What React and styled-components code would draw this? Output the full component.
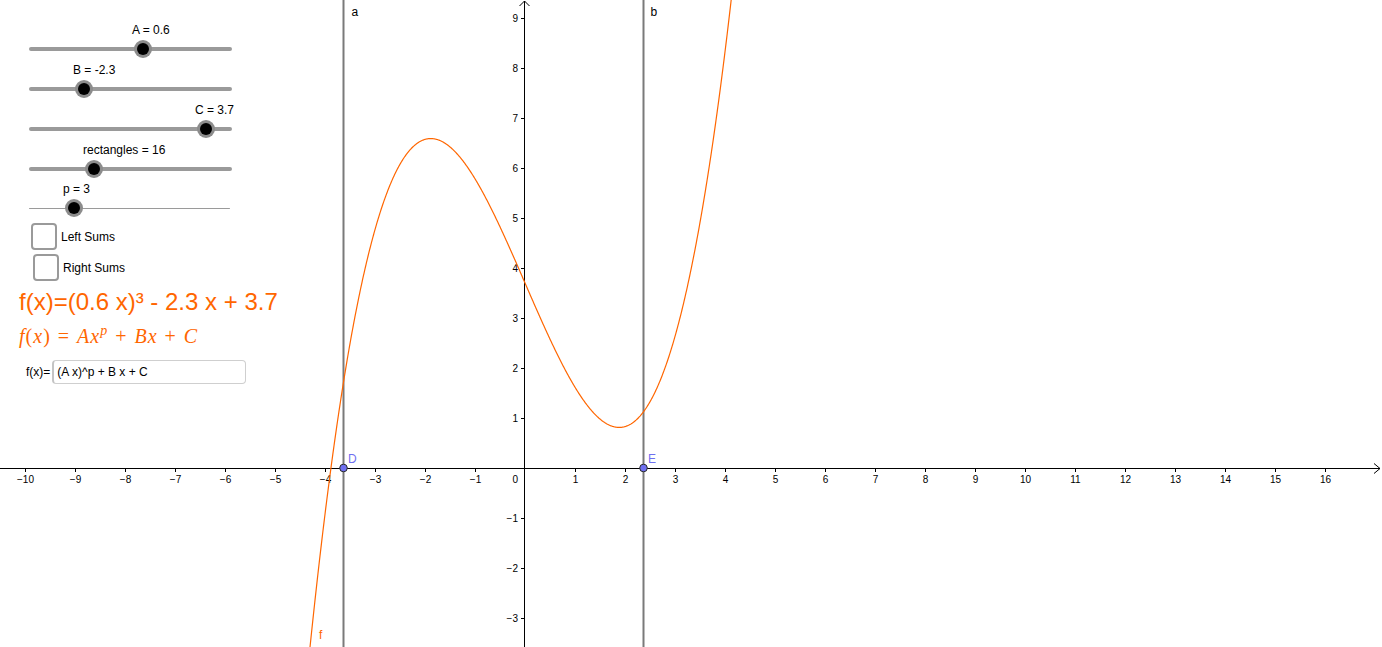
import React from "react";
import styled, { createGlobalStyle } from "styled-components";

const GlobalStyle = createGlobalStyle`
  html, body { margin: 0; padding: 0; background: #fff; }
  body { font-family: "Liberation Sans", Arial, sans-serif; color: #000; }
`;

const W = 1382;
const H = 647;
const OX = 525;
const OY = 468;
const S = 50;
const px = (x) => OX + x * S;
const py = (y) => OY - y * S;

const A = 0.6, B = -2.3, C = 3.7, P = 3;
const f = (x) => Math.pow(A * x, P) + B * x + C;
const LINE_A = -3.63;
const LINE_B = 2.37;
const ORANGE = "#ff6600";

const sliders = [
  { label: "A = 0.6", value: 0.6, min: -5, max: 5, width: 203 },
  { label: "B = -2.3", value: -2.3, min: -5, max: 5, width: 203 },
  { label: "C = 3.7", value: 3.7, min: -5, max: 5, width: 203 },
  { label: "rectangles = 16", value: 16, min: 0, max: 50, width: 203 },
  { label: "p = 3", value: 3, min: 1, max: 10, width: 201, thin: true },
];

const Stage = styled.div`
  position: relative;
  width: ${W}px;
  height: ${H}px;
  overflow: hidden;
  background: #fff;
`;

const GraphSvg = styled.svg`
  position: absolute;
  inset: 0;
  display: block;
`;

const Controls = styled.div`
  position: absolute;
  top: 0;
  left: 0;
  display: flex;
  flex-direction: column;
  padding-top: 23px;
  width: 260px;
`;

const SliderRow = styled.div`
  display: flex;
  flex-direction: column;
  gap: 2px;
  margin-top: ${(p) => (p.$thin ? "-1px" : "0")};
  margin-bottom: ${(p) => (p.$last ? "0" : "4px")};
`;

const SliderLabel = styled.div`
  font-size: 12px;
  line-height: 14px;
  height: 14px;
  white-space: nowrap;
  padding-left: ${(p) => p.$offset}px;
`;

const TrackZone = styled.div`
  position: relative;
  height: 20px;
  margin-left: 29px;
  width: ${(p) => p.$width}px;
  display: flex;
  align-items: center;
`;

const TrackBar = styled.div`
  width: 100%;
  height: ${(p) => (p.$thin ? "1px" : "4px")};
  border-radius: 2px;
  background: #9a9a9a;
`;

const Knob = styled.div`
  position: absolute;
  top: 1px;
  width: 18px;
  height: 18px;
  margin-left: -9px;
  border-radius: 50%;
  background: #8c8c8c;
  display: flex;
  align-items: center;
  justify-content: center;
  &::after {
    content: "";
    width: 12px;
    height: 12px;
    border-radius: 50%;
    background: #000;
  }
`;

const CheckList = styled.div`
  display: flex;
  flex-direction: column;
  gap: 4px;
  margin-top: 5px;
`;

const CheckRow = styled.label`
  display: flex;
  align-items: center;
  gap: 4px;
  padding-left: ${(p) => p.$indent}px;
  font-size: 12px;
  height: 27px;
`;

const CheckBox = styled.span`
  box-sizing: border-box;
  width: 26px;
  height: 27px;
  border: 2px solid #9a9a9a;
  border-radius: 4px;
  background: #fff;
`;

const FormulaText = styled.div`
  margin-top: 7px;
  padding-left: 19px;
  font-size: 24px;
  line-height: 28px;
  color: ${ORANGE};
  white-space: nowrap;
`;

const MathLine = styled.div`
  margin-top: 8px;
  padding-left: 19px;
  font-family: "Liberation Serif", "Times New Roman", serif;
  font-size: 20px;
  line-height: 24px;
  letter-spacing: 1px;
  color: ${ORANGE};
  white-space: nowrap;
`;

const MVar = styled.i`
  font-style: italic;
`;

const MOp = styled.span`
  margin: 0 ${(p) => p.$space || 0.35}em;
`;

const MSup = styled.sup`
  font-style: italic;
  font-size: 0.7em;
  vertical-align: 0.55em;
  line-height: 0;
`;

const InputRow = styled.div`
  display: flex;
  align-items: center;
  gap: 2px;
  margin-top: 12px;
  padding-left: 26px;
  font-size: 12px;
`;

const InputBox = styled.div`
  box-sizing: border-box;
  width: 194px;
  height: 24px;
  display: flex;
  align-items: center;
  padding-left: 3px;
  border: 1px solid #cfcfcf;
  border-left: 2px solid #c4c4c4;
  border-radius: 4px;
  background: #fff;
  font-size: 12px;
`;

function Slider({ s, last }) {
  const t = (s.value - s.min) / (s.max - s.min);
  const knobX = t * s.width;
  return (
    <SliderRow $thin={s.thin} $last={last}>
      <SliderLabel $offset={Math.round(29 + knobX - 11)}>{s.label}</SliderLabel>
      <TrackZone $width={s.width}>
        <TrackBar $thin={s.thin} />
        <Knob style={{ left: `${knobX}px` }} />
      </TrackZone>
    </SliderRow>
  );
}

function Graph() {
  const xs = [];
  for (let i = -10; i <= 16; i++) if (i !== 0) xs.push(i);
  const ys = [];
  for (let j = -3; j <= 9; j++) if (j !== 0) ys.push(j);
  const fmt = (n) => (n < 0 ? "\u2212" + Math.abs(n) : String(n));

  let d = "";
  for (let x = -4.4; x <= 4.3; x += 0.01) {
    const X = px(x);
    const Y = py(f(x));
    d += (d ? " L" : "M") + X.toFixed(2) + " " + Y.toFixed(2);
  }

  const ax = px(LINE_A);
  const bx = px(LINE_B);

  return (
    <GraphSvg width={W} height={H} viewBox={`0 0 ${W} ${H}`}>
      <g fontFamily="Liberation Sans, Arial, sans-serif" fontSize="10" fill="#000">
        {/* x axis */}
        <line x1="0" y1={OY + 0.5} x2={W - 2} y2={OY + 0.5} stroke="#000" strokeWidth="1" />
        <polyline
          points={`${W - 8},${OY - 4.5} ${W - 2},${OY + 0.5} ${W - 8},${OY + 5.5}`}
          fill="none"
          stroke="#000"
          strokeWidth="1"
        />
        {xs.map((i) => (
          <g key={"x" + i}>
            <line x1={px(i) + 0.5} y1={OY} x2={px(i) + 0.5} y2={OY + 4} stroke="#000" strokeWidth="1" />
            <text x={px(i) + 0.5} y={OY + 15} textAnchor="middle">
              {fmt(i)}
            </text>
          </g>
        ))}
        {/* y axis */}
        <line x1={OX - 0.5} y1="1" x2={OX - 0.5} y2={H} stroke="#000" strokeWidth="1" />
        <polyline
          points={`${OX - 5.5},6 ${OX - 0.5},1 ${OX + 4.5},6`}
          fill="none"
          stroke="#000"
          strokeWidth="1"
        />
        {ys.map((j) => (
          <g key={"y" + j}>
            <line x1={OX - 4} y1={py(j) + 0.5} x2={OX} y2={py(j) + 0.5} stroke="#000" strokeWidth="1" />
            <text x={OX - 7} y={py(j) + 4} textAnchor="end">
              {fmt(j)}
            </text>
          </g>
        ))}
        <text x={OX - 7} y={OY + 15} textAnchor="end">0</text>
      </g>

      {/* vertical lines a, b */}
      <line x1={ax} y1="0" x2={ax} y2={H} stroke="#7a7a7a" strokeWidth="2" />
      <line x1={bx} y1="0" x2={bx} y2={H} stroke="#7a7a7a" strokeWidth="2" />
      <g fontFamily="Liberation Sans, Arial, sans-serif" fontSize="12">
        <text x={ax + 8} y="16" fill="#000">a</text>
        <text x={bx + 7} y="16" fill="#000">b</text>
      </g>

      {/* curve */}
      <path d={d} fill="none" stroke={ORANGE} strokeWidth="1.2" strokeLinejoin="round" />
      <text x="319" y="639" fontFamily="Liberation Sans, Arial, sans-serif" fontSize="12" fill={ORANGE}>
        f
      </text>

      {/* points */}
      <g fontFamily="Liberation Sans, Arial, sans-serif" fontSize="12" fill="#6f6ff0">
        <circle cx={ax} cy={OY} r="3.8" fill="#6f6ff0" stroke="#2a2a2a" strokeWidth="1" />
        <circle cx={bx} cy={OY} r="3.8" fill="#6f6ff0" stroke="#2a2a2a" strokeWidth="1" />
        <text x={ax + 4.5} y="463">D</text>
        <text x={bx + 4.5} y="463">E</text>
      </g>
    </GraphSvg>
  );
}

export default function App() {
  return (
    <Stage>
      <GlobalStyle />
      <Graph />
      <Controls>
        {sliders.map((s, i) => (
          <Slider key={s.label} s={s} last={i === sliders.length - 1} />
        ))}
        <CheckList>
          <CheckRow $indent={31}>
            <CheckBox />
            Left Sums
          </CheckRow>
          <CheckRow $indent={33}>
            <CheckBox />
            Right Sums
          </CheckRow>
        </CheckList>
        <FormulaText>f(x)=(0.6 x)³ - 2.3 x + 3.7</FormulaText>
        <MathLine>
          <MVar>f</MVar>(<MVar>x</MVar>)<MOp>=</MOp>
          <MVar>Ax</MVar>
          <MSup>p</MSup>
          <MOp>+</MOp>
          <MVar>Bx</MVar>
          <MOp>+</MOp>
          <MVar>C</MVar>
        </MathLine>
        <InputRow>
          f(x)=
          <InputBox>(A x)^p + B x + C</InputBox>
        </InputRow>
      </Controls>
    </Stage>
  );
}
